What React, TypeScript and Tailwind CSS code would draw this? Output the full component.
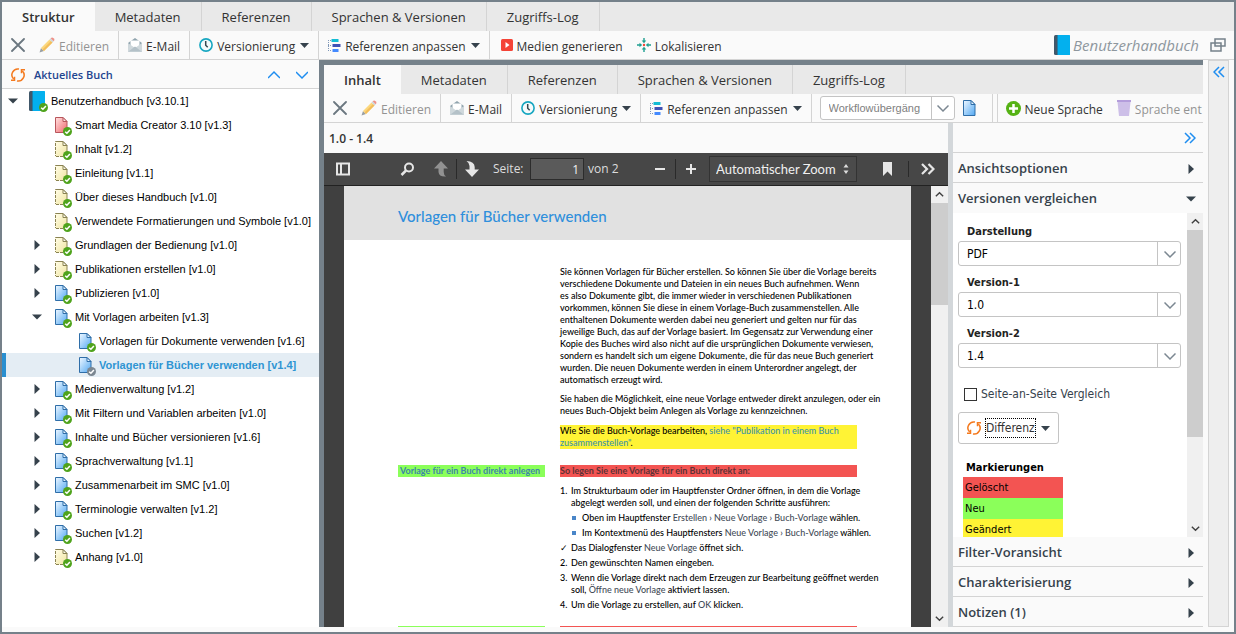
import type { ReactNode } from "react";

const TABS = ["Metadaten", "Referenzen", "Sprachen & Versionen", "Zugriffs-Log"];

type Kind = "book" | "red" | "yellow" | "blue";
type TreeNode = {
  label: string;
  depth: number;
  kind: Kind;
  toggle?: "open" | "closed";
  selected?: boolean;
};

const TREE: TreeNode[] = [
  { label: "Benutzerhandbuch [v3.10.1]", depth: 0, kind: "book", toggle: "open" },
  { label: "Smart Media Creator 3.10 [v1.3]", depth: 1, kind: "red" },
  { label: "Inhalt [v1.2]", depth: 1, kind: "yellow" },
  { label: "Einleitung [v1.1]", depth: 1, kind: "yellow" },
  { label: "Über dieses Handbuch [v1.0]", depth: 1, kind: "yellow" },
  { label: "Verwendete Formatierungen und Symbole [v1.0]", depth: 1, kind: "yellow" },
  { label: "Grundlagen der Bedienung [v1.0]", depth: 1, kind: "yellow", toggle: "closed" },
  { label: "Publikationen erstellen [v1.0]", depth: 1, kind: "yellow", toggle: "closed" },
  { label: "Publizieren [v1.0]", depth: 1, kind: "blue", toggle: "closed" },
  { label: "Mit Vorlagen arbeiten [v1.3]", depth: 1, kind: "blue", toggle: "open" },
  { label: "Vorlagen für Dokumente verwenden [v1.6]", depth: 2, kind: "blue" },
  { label: "Vorlagen für Bücher verwenden [v1.4]", depth: 2, kind: "blue", selected: true },
  { label: "Medienverwaltung [v1.2]", depth: 1, kind: "blue", toggle: "closed" },
  { label: "Mit Filtern und Variablen arbeiten [v1.0]", depth: 1, kind: "blue", toggle: "closed" },
  { label: "Inhalte und Bücher versionieren [v1.6]", depth: 1, kind: "blue", toggle: "closed" },
  { label: "Sprachverwaltung [v1.1]", depth: 1, kind: "blue", toggle: "closed" },
  { label: "Zusammenarbeit im SMC [v1.0]", depth: 1, kind: "blue", toggle: "closed" },
  { label: "Terminologie verwalten [v1.2]", depth: 1, kind: "blue", toggle: "closed" },
  { label: "Suchen [v1.2]", depth: 1, kind: "blue", toggle: "closed" },
  { label: "Anhang [v1.0]", depth: 1, kind: "yellow", toggle: "closed" },
];

const INDENT = ["pl-[6px]", "pl-[30px]", "pl-[54px]"];

/* Icons */

function Triangle({ open, className = "" }: { open?: boolean; className?: string }) {
  return (
    <svg width="10" height="10" viewBox="0 0 10 10" className={`shrink-0 ${className}`} fill="#36424c">
      <path d={open ? "M0 2.5h10L5 7.5z" : "M2.5 0v10L8 5z"} />
    </svg>
  );
}

function Caret() {
  return (
    <svg width="9" height="5" viewBox="0 0 9 5" fill="#36424c" className="ml-px shrink-0">
      <path d="M0 0h9L4.5 5z" />
    </svg>
  );
}

const PAPER = {
  red: { from: "#ffd6d6", to: "#f0686e", stroke: "#b8565c" },
  yellow: { from: "#fffbe0", to: "#efe4a0", stroke: "#8a8352" },
  blue: { from: "#dff0ff", to: "#52a8f2", stroke: "#2f6ea8" },
};

function PaperDefs() {
  return (
    <svg width="0" height="0" className="absolute" aria-hidden="true">
      <defs>
        {Object.entries(PAPER).map(([name, c]) => (
          <linearGradient key={name} id={`paper-${name}`} x1="0" y1="0" x2="1" y2="1">
            <stop offset="0.1" stopColor={c.from} />
            <stop offset="1" stopColor={c.to} />
          </linearGradient>
        ))}
      </defs>
    </svg>
  );
}

function Paper({ kind }: { kind: "red" | "yellow" | "blue" }) {
  return (
    <g stroke={PAPER[kind].stroke} strokeWidth="1">
      <path d="M.5 .5h7.500l4 4v11H.5z" fill={`url(#paper-${kind})`} />
      {kind === "yellow" && <path d="M.5 1v15M0 15.500h12" stroke="#fffbe0" strokeDasharray="1 3" />}
      <path d="M8 .5v4h4z" fill="#fff" fillOpacity="0.7" />
    </g>
  );
}

function Book() {
  return (
    <g>
      <path d="M0 1.500Q0 0 1.500 0H4v20H1.500Q0 20 0 18.500z" fill="#41586a" />
      <path d="M4 0h11.500q.5 0 .5 .5v19q0 .5-.5 .5H4z" fill="#03b0ee" />
      <path d="M3.500 0v20" stroke="#1d7fa8" />
    </g>
  );
}

function NodeIcon({ kind, grey }: { kind: Kind; grey?: boolean }) {
  return (
    <svg width="20" height="24" viewBox="0 0 20 24" className="shrink-0">
      <g transform={kind === "book" ? "translate(1 2)" : "translate(3 4)"}>
        {kind === "book" ? <Book /> : <Paper kind={kind} />}
      </g>
      <circle cx="15.500" cy="18.500" r="4.500" fill={grey ? "#7b8791" : "#4fa31c"} />
      <path d="M13.200 18.700l1.700 1.600 3-3.300" fill="none" stroke="#fff" strokeWidth="1.500" />
    </svg>
  );
}

function CloseIcon() {
  return (
    <svg width="14" height="14" viewBox="0 0 14 14" stroke="#6b7780" strokeWidth="1.800" strokeLinecap="round">
      <path d="M1 1l12 12M13 1L1 13" />
    </svg>
  );
}

function PencilIcon() {
  return (
    <svg width="16" height="16" viewBox="0 0 16 16">
      <path d="M.5 15.500l1.500-4.500 3 3z" fill="#9aa0a4" />
      <path d="M2 11l8.500-8.500 3 3L5 14z" fill="#fbd77d" />
      <path d="M3.500 12.500l8.500-8.500 1.500 1.500L5 14z" fill="#f3bd5b" />
      <path d="M10.500 2.500l1.200-1.200 3 3-1.200 1.200z" fill="#cfd6da" />
      <path d="M11.700 1.300Q13 0 14.300 .9l.9 .9Q16 3 14.700 4.300z" fill="#ee8f86" />
    </svg>
  );
}

function MailIcon() {
  return (
    <svg width="14" height="14" viewBox="0 0 14 14">
      <path d="M0 5l7-5 7 5v8.500H0z" fill="#90a4ae" />
      <path d="M2.500 2.500h9V9h-9z" fill="#fff" />
      <path d="M0 5l7 5 7-5v8q0 1-1 1H1q-1 0-1-1z" fill="#cfd8dc" />
      <path d="M.5 13.500L7 8.500l6.500 5z" fill="#b4c1c8" />
    </svg>
  );
}

function ClockIcon() {
  return (
    <svg width="14" height="14" viewBox="0 0 14 14" fill="none">
      <circle cx="7" cy="7" r="6.100" fill="#f5fbfc" stroke="#16a6c0" strokeWidth="1.600" />
      <path d="M6.700 3v4.300l2 2" stroke="#37474f" strokeWidth="1.500" />
    </svg>
  );
}

function ReferencesIcon() {
  return (
    <svg width="13" height="13" viewBox="0 0 13 13">
      <path d="M3.500 0h7v3h-7z" fill="#12bcd4" />
      <path d="M4.500 5h8v3h-8z" fill="#3f51b5" />
      <path d="M4.500 10h6v3h-6z" fill="#448aff" />
      <path d="M0 1.500h3M0 6.500h4M0 11.500h4M.5 1v11" stroke="#7f97b8" strokeDasharray="1 1" fill="none" />
    </svg>
  );
}

function MediaIcon() {
  return (
    <svg width="12" height="12" viewBox="0 0 12 12">
      <rect width="12" height="12" rx="1.500" fill="#f44336" />
      <path d="M4.500 3l4 3-4 3z" fill="#fff" />
    </svg>
  );
}

function LocalizeIcon() {
  return (
    <svg width="14" height="14" viewBox="0 0 14 14">
      <g fill="#1d9e90">
        <path id="arm" d="M6.300 0h1.400v2.500h1.600L7 5.200 4.700 2.500h1.600z" />
        <use href="#arm" transform="rotate(90 7 7)" />
        <use href="#arm" transform="rotate(180 7 7)" />
        <use href="#arm" transform="rotate(270 7 7)" />
      </g>
      <circle cx="7" cy="7" r="1.200" fill="#f44336" />
    </svg>
  );
}

function RefreshIcon() {
  return (
    <svg width="14" height="14" viewBox="0 0 14 14" fill="none" stroke="#f47a1f" strokeWidth="1.500">
      <path d="M8 1.100A5.900 5.900 0 0 0 2.600 11" />
      <path d="M0 12.200h3.500V8.700" />
      <path d="M6 12.900A5.900 5.900 0 0 0 11.400 3" />
      <path d="M14 1.800h-3.500v3.500" />
    </svg>
  );
}

function Chevron({ d, color = "#1e8df0", size = 12 }: { d: string; color?: string; size?: number }) {
  return (
    <svg width={size} height={size} viewBox="0 0 12 12" fill="none" stroke={color} strokeWidth="1.500">
      <path d={d} />
    </svg>
  );
}

/* Shared pieces */

function TabBar({ active }: { active: string }) {
  return (
    <div role="tablist" className="flex h-[29px] shrink-0 bg-[#e9e9e9]">
      <button role="tab" aria-selected="true" className="bg-[#fafafa] px-5 pt-[2px] text-[13px] font-semibold text-[#333]">
        {active}
      </button>
      {TABS.map((tab) => (
        <button key={tab} role="tab" aria-selected="false" className="border-r border-[#d4d4d4] px-5 pt-[2px] text-[13px] text-[#333]">
          {tab}
        </button>
      ))}
    </div>
  );
}

function ToolButton({ icon, label, menu, disabled }: { icon: ReactNode; label?: string; menu?: boolean; disabled?: boolean }) {
  return (
    <button disabled={disabled} className={`flex shrink-0 items-center gap-1 whitespace-nowrap ${disabled ? "text-[#939393]" : "text-[#333]"}`}>
      {icon}
      <span className="pt-1">{label}</span>
      {menu && <Caret />}
    </button>
  );
}

function ToolGroup({ children }: { children: ReactNode }) {
  return <div className="flex shrink-0 items-center gap-[14px] border-r border-[#d4d4d4] px-[9px]">{children}</div>;
}

function CommonTools() {
  return (
    <>
      <ToolGroup>
        <button aria-label="Schließen"><CloseIcon /></button>
        <ToolButton icon={<PencilIcon />} label="Editieren" disabled />
      </ToolGroup>
      <ToolGroup>
        <ToolButton icon={<MailIcon />} label="E-Mail" />
      </ToolGroup>
      <ToolGroup>
        <ToolButton icon={<ClockIcon />} label="Versionierung" menu />
      </ToolGroup>
      <ToolGroup>
        <ToolButton icon={<ReferencesIcon />} label="Referenzen anpassen" menu />
      </ToolGroup>
    </>
  );
}

function Tree() {
  return (
    <ul role="tree" className="min-h-0 grow overflow-hidden bg-white font-['Liberation_Sans',Arial,sans-serif] text-[11px] text-black">
      {TREE.map((n) => (
        <li
          key={n.label}
          role="treeitem"
          aria-selected={!!n.selected}
          className={`flex h-6 items-center whitespace-nowrap ${INDENT[n.depth]} ${
            n.selected ? "bg-[#e4edf4] font-bold text-[#2f95d3] shadow-[inset_4px_0_0_#2a8fd0]" : ""
          }`}
        >
          <span className="mr-[10px] w-[10px] shrink-0">{n.toggle && <Triangle open={n.toggle === "open"} />}</span>
          <NodeIcon kind={n.kind} grey={n.selected} />
          <span className="ml-[3px]">{n.label}</span>
        </li>
      ))}
    </ul>
  );
}

function ScrollBar({ thumb, className }: { thumb: string; className: string }) {
  return (
    <div className={`flex shrink-0 flex-col items-center bg-[#f0f0f0] ${className}`}>
      <span className="flex h-[17px] items-center"><Chevron d="M2 8l4-4 4 4" color="#404040" size={11} /></span>
      <span className={`w-full bg-[#cdcdcd] ${thumb}`} />
      <span className="mt-auto flex h-[17px] items-center"><Chevron d="M2 4l4 4 4-4" color="#404040" size={11} /></span>
    </div>
  );
}

/* PDF viewer */

function PdfToolbar() {
  return (
    <div className="flex h-[33px] shrink-0 items-center border-b border-[#222] bg-[#474747] px-3 text-[12px] text-[#ddd]">
      <button aria-label="Seitenleiste">
        <svg width="14" height="14" viewBox="0 0 14 14" fill="none" stroke="#e6e6e6" strokeWidth="2">
          <path d="M1 1.500h12v11H1zM5 1.500v11" />
        </svg>
      </button>
      <button aria-label="Suchen" className="ml-[50px]">
        <svg width="15" height="15" viewBox="0 0 15 15" fill="none" stroke="#e6e6e6" strokeWidth="2">
          <circle cx="9" cy="5.500" r="4" />
          <path d="M6 8.500L1.500 13" strokeWidth="2.500" />
        </svg>
      </button>
      <button aria-label="Vorherige Seite" className="ml-[19px]">
        <svg width="14" height="16" viewBox="0 0 14 16" fill="#929292">
          <path d="M7 0l7 7.500h-4.300V11q0 3 2.300 4.500Q5 16 4.500 11V7.500H0z" />
        </svg>
      </button>
      <span className="mx-2 h-5 w-px bg-[#2a2a2a]" />
      <button aria-label="Nächste Seite">
        <svg width="14" height="16" viewBox="0 0 14 16" fill="#e6e6e6">
          <path d="M7 16l7-7.500h-4.300V6Q9.500 .5 1.500 0 4.500 2 4.500 5v3.500H0z" />
        </svg>
      </button>
      <label htmlFor="page" className="ml-[14px] w-[37px] whitespace-nowrap">Seite:</label>
      <input id="page" defaultValue="1" className="h-[22px] w-[54px] border border-[#2c2c2c] bg-[#5a5a5a] px-1 text-right text-[#f2f2f2]" />
      <span className="ml-1 whitespace-nowrap">von 2</span>
      <button aria-label="Verkleinern" className="ml-auto">
        <svg width="12" height="12" viewBox="0 0 12 12" stroke="#e6e6e6" strokeWidth="2"><path d="M1 6h10" /></svg>
      </button>
      <span className="mx-[9px] h-5 w-px bg-[#2a2a2a]" />
      <button aria-label="Vergrößern">
        <svg width="12" height="12" viewBox="0 0 12 12" stroke="#e6e6e6" strokeWidth="2"><path d="M1 6h10M6 1v10" /></svg>
      </button>
      <div className="relative ml-3">
        <select aria-label="Zoom" className="h-[26px] w-[148px] appearance-none border border-[#333] bg-[#4b4b4b] px-[6px] pt-[2px] font-['Lato',sans-serif] text-[13px] text-[#f0f0f0]">
          <option>Automatischer Zoom</option>
        </select>
        <svg width="6" height="10" viewBox="0 0 6 10" fill="#ddd" className="pointer-events-none absolute top-2 right-2">
          <path d="M3 0l2.500 3.500h-5zM3 10l2.500-3.500h-5z" />
        </svg>
      </div>
      <button aria-label="Lesezeichen" className="ml-[26px]">
        <svg width="9" height="14" viewBox="0 0 9 14" fill="#e6e6e6"><path d="M0 0h9v14L4.500 9.500 0 14z" /></svg>
      </button>
      <span className="mr-[12px] ml-4 h-4 w-px bg-[#2a2a2a]" />
      <button aria-label="Werkzeuge" className="mr-px">
        <svg width="14" height="12" viewBox="0 0 14 12" fill="none" stroke="#e6e6e6" strokeWidth="2.200">
          <path d="M1 1l5 5-5 5M7.500 1l5 5-5 5" />
        </svg>
      </button>
    </div>
  );
}

function Term({ children }: { children: ReactNode }) {
  return <span className="text-[#444c58]">{children}</span>;
}

function PdfPage() {
  return (
    <article className="min-w-0 grow overflow-hidden bg-white font-['Lato','Open_Sans',sans-serif] text-[9px] leading-[12px] font-medium text-black">
      <h1 className="h-[54px] bg-[#e1e1e1] pt-[20px] pl-[54px] text-[15px] leading-5 text-[#2f8fdc]">
        Vorlagen für Bücher verwenden
      </h1>
      <div className="grid grid-cols-[147px_297px] gap-x-[15px] pt-[26px] pl-[54px] whitespace-nowrap">
        <div className="col-start-2">
          <p>
            Sie können Vorlagen für Bücher erstellen. So können Sie über die Vorlage bereits<br />
            verschiedene Dokumente und Dateien in ein neues Buch aufnehmen. Wenn<br />
            es also Dokumente gibt, die immer wieder in verschiedenen Publikationen<br />
            vorkommen, können Sie diese in einem Vorlage-Buch zusammenstellen. Alle<br />
            enthaltenen Dokumente werden dabei neu generiert und gelten nur für das<br />
            jeweilige Buch, das auf der Vorlage basiert. Im Gegensatz zur Verwendung einer<br />
            Kopie des Buches wird also nicht auf die ursprünglichen Dokumente verwiesen,<br />
            sondern es handelt sich um eigene Dokumente, die für das neue Buch generiert<br />
            wurden. Die neuen Dokumente werden in einem Unterordner angelegt, der<br />
            automatisch erzeugt wird.
          </p>
          <p className="mt-[7px]">
            Sie haben die Möglichkeit, eine neue Vorlage entweder direkt anzulegen, oder ein<br />
            neues Buch-Objekt beim Anlegen als Vorlage zu kennzeichnen.
          </p>
          <p className="mt-2 bg-[#fff335]">
            Wie Sie die Buch-Vorlage bearbeiten,{" "}
            <a href="#publikation" className="text-[#3d92a8]">
              siehe "Publikation in einem Buch<br />
              zusammenstellen"
            </a>
            .
          </p>
        </div>
        <h2 className="mt-4 h-3 self-start bg-[#8bff5a] pl-[2px] font-bold text-[#3d86a8]">Vorlage für ein Buch direkt anlegen</h2>
        <div className="mt-4">
          <h3 className="bg-[#f35452] font-bold text-[#5c3236]">So legen Sie eine Vorlage für ein Buch direkt an:</h3>
          <ol className="mt-2">
            <Step mark="1.">
              Im Strukturbaum oder im Hauptfenster Ordner öffnen, in dem die Vorlage<br />
              abgelegt werden soll, und einen der folgenden Schritte ausführen:
              <ul>
                <Bullet>Oben im Hauptfenster <Term>Erstellen › Neue Vorlage › Buch-Vorlage</Term> wählen.</Bullet>
                <Bullet>Im Kontextmenü des Hauptfensters <Term>Neue Vorlage › Buch-Vorlage</Term> wählen.</Bullet>
              </ul>
            </Step>
            <Step mark="✓">Das Dialogfenster <Term>Neue Vorlage</Term> öffnet sich.</Step>
            <Step mark="2.">Den gewünschten Namen eingeben.</Step>
            <Step mark="3.">
              Wenn die Vorlage direkt nach dem Erzeugen zur Bearbeitung geöffnet werden<br />
              soll, <Term>Öffne neue Vorlage</Term> aktiviert lassen.
            </Step>
            <Step mark="4.">Um die Vorlage zu erstellen, auf <Term>OK</Term> klicken.</Step>
          </ol>
        </div>
        <div className="mt-3 h-5 bg-[#8bff5a]" />
        <div className="mt-3 h-5 bg-[#f35452]" />
      </div>
    </article>
  );
}

function Step({ mark, children }: { mark: string; children: ReactNode }) {
  return (
    <li className="mb-[3px] flex">
      <span className="w-[11px] shrink-0">{mark}</span>
      <div>{children}</div>
    </li>
  );
}

function Bullet({ children }: { children: ReactNode }) {
  return (
    <li className="mt-[3px] flex items-center">
      <span className="mr-[6px] ml-px size-1 bg-[#4a86c8]" />
      <span>{children}</span>
    </li>
  );
}

/* Right panel */

function Section({ title, open }: { title: string; open?: boolean }) {
  return (
    <button
      aria-expanded={!!open}
      className={`flex h-[30px] w-full shrink-0 items-center justify-between bg-[#fafafa] pt-[2px] pr-[7px] pl-[5px] text-left text-[13px] font-semibold text-[#36424c] ${
        open ? "" : "border-b border-[#d4d4d4]"
      }`}
    >
      {title}
      <Triangle open={open} />
    </button>
  );
}

function Field({ id, label, value }: { id: string; label: string; value: string }) {
  return (
    <div className="mb-2">
      <label htmlFor={id} className="block pl-[9px] text-[11px] leading-[18px] font-bold text-[#222]">{label}</label>
      <div className="relative flex">
        <select id={id} className="h-[25px] grow appearance-none rounded-[3px] border border-[#c4c4c4] bg-white px-2 pt-px text-[12px] text-black">
          <option>{value}</option>
        </select>
        <span className="pointer-events-none absolute inset-y-0 right-0 flex w-6 items-center justify-center border-l border-[#c4c4c4]">
          <Chevron d="M0.500 3.500l5.500 5.500 5.500-5.500" color="#7b8791" />
        </span>
      </div>
    </div>
  );
}

function ComparePanel() {
  return (
    <div className="flex min-h-0 grow bg-white">
      <div className="min-w-0 grow overflow-hidden pt-[10px] pr-[6px] pl-[5px] font-['DejaVu_Sans_Condensed','DejaVu_Sans',sans-serif]">
        <Field id="view" label="Darstellung" value="PDF" />
        <Field id="v1" label="Version-1" value="1.0" />
        <Field id="v2" label="Version-2" value="1.4" />
        <label className="mt-[17px] ml-[6px] flex items-center gap-1 text-[12px] leading-[18px] text-[#36424c]">
          <input type="checkbox" className="size-[13px] appearance-none border border-[#333] bg-white" />
          Seite-an-Seite Vergleich
        </label>
        <button className="mt-[9px] flex h-8 items-center gap-1 rounded-[3px] border border-[#c4c4c4] bg-white px-2 text-[12px] text-[#333]">
          <RefreshIcon />
          <span className="border border-dotted border-black">Differenz</span>
          <Caret />
        </button>
        <h4 className="mt-[15px] ml-2 text-[11px] leading-[18px] font-bold text-black">Markierungen</h4>
        <ul className="ml-[5px] w-[100px] text-[11px] leading-[21px] text-black">
          <li className="bg-[#f35452] pl-[2px]">Gelöscht</li>
          <li className="bg-[#8bff5a] pl-[2px]">Neu</li>
          <li className="bg-[#fff335] pl-[2px]">Geändert</li>
        </ul>
      </div>
      <ScrollBar className="w-4" thumb="h-[207px]" />
    </div>
  );
}

export default function App() {
  return (
    <div className="flex h-screen flex-col overflow-hidden border-2 border-[#75818a] bg-[#fafafa] font-['Open_Sans',sans-serif] text-[12px] text-[#333]">
      <PaperDefs />
      <TabBar active="Struktur" />
      <div className="flex h-[29px] shrink-0 border-b border-[#d4d4d4]">
        <CommonTools />
        <div className="flex items-center gap-[14px] pl-[11px]">
          <ToolButton icon={<MediaIcon />} label="Medien generieren" />
          <ToolButton icon={<LocalizeIcon />} label="Lokalisieren" />
        </div>
        <div className="ml-auto flex items-center gap-[3px] pr-2 text-[15px] text-[#8e979e] italic">
          <svg width="16" height="20" viewBox="0 0 16 20"><Book /></svg>
          Benutzerhandbuch
          <button aria-label="Fenster" className="ml-2">
            <svg width="16" height="14" viewBox="0 0 16 14" fill="none" stroke="#75818a" strokeWidth="1.500">
              <path d="M5 1h10v7H5zM1 5h10v8H1z" />
            </svg>
          </button>
        </div>
      </div>

      <div className="mb-[5px] flex min-h-0 grow">
        {/* Structure tree */}
        <section className="flex w-[317px] shrink-0 flex-col">
          <header className="flex h-[29px] shrink-0 items-center border-b border-[#d4d4d4] pt-px pr-[11px] pl-[9px]">
            <RefreshIcon />
            <h2 className="ml-[9px] pt-px text-[11px] font-semibold text-[#1f4590]">Aktuelles Buch</h2>
            <button aria-label="Nach oben" className="mr-4 ml-auto"><Chevron d="M0 9l6-6 6 6" /></button>
            <button aria-label="Nach unten"><Chevron d="M0 3l6 6 6-6" /></button>
          </header>
          <Tree />
        </section>

        {/* Document window */}
        <section className="flex min-w-0 grow flex-col border-t-5 border-l-5 border-[#75818a] bg-[#fafafa]">
          <TabBar active="Inhalt" />
          <div className="flex h-[29px] shrink-0 overflow-hidden border-b border-[#d4d4d4]">
            <CommonTools />
            <div className="relative ml-2 shrink-0 self-center">
              <select aria-label="Workflow" className="block h-6 w-[135px] appearance-none rounded-[3px] border border-[#c4c4c4] bg-white pl-2 font-['Liberation_Sans',Arial,sans-serif] text-[11px] text-[#808080]">
                <option>Workflowübergäng</option>
              </select>
              <span className="pointer-events-none absolute inset-y-0 right-0 flex w-6 items-center justify-center border-l border-[#c4c4c4]">
                <Chevron d="M0.500 3.500l5.500 5.500 5.500-5.500" color="#7b8791" />
              </span>
            </div>
            <button aria-label="Dokument" className="mx-2 shrink-0">
              <svg width="13" height="16" viewBox="0 0 13 16"><Paper kind="blue" /></svg>
            </button>
            <div className="ml-2 w-[6px] shrink-0 border-x border-[#d4d4d4]" />
            <div className="flex shrink-0 items-center gap-[14px] pl-2">
              <ToolButton
                icon={
                  <svg width="15" height="15" viewBox="0 0 15 15">
                    <circle cx="7.500" cy="7.500" r="7.500" fill="#55b214" />
                    <path d="M7.500 3v9M3 7.500h9" stroke="#fff" strokeWidth="2.500" />
                  </svg>
                }
                label="Neue Sprache"
              />
              <ToolButton
                disabled
                icon={
                  <svg width="14" height="16" viewBox="0 0 14 16">
                    <path d="M.5 2h13L12 16H2z" fill="#cdbfe8" />
                    <path d="M0 0h14v2H0z" fill="#b39ddb" />
                  </svg>
                }
                label="Sprache ent"
              />
            </div>
          </div>

          <div className="flex min-h-0 grow">
            <div className="flex min-w-0 grow flex-col">
              <h3 className="h-[30px] shrink-0 pl-[5px] text-[12px] leading-[32px] font-semibold">1.0 - 1.4</h3>
              <PdfToolbar />
              <div className="flex min-h-0 grow bg-[#404040] pl-5">
                <PdfPage />
                <ScrollBar className="ml-5 w-[17px]" thumb="h-[102px]" />
              </div>
            </div>
            <aside className="flex w-[255px] shrink-0 flex-col border-l-5 border-[#d3d7da]">
              <div className="flex h-[30px] shrink-0 items-center justify-end border-b border-[#d4d4d4] pr-[7px]">
                <button aria-label="Einklappen"><Chevron d="M1 1l5 5-5 5M6 1l5 5-5 5" /></button>
              </div>
              <Section title="Ansichtsoptionen" />
              <Section title="Versionen vergleichen" open />
              <ComparePanel />
              <Section title="Filter-Voransicht" />
              <Section title="Charakterisierung" />
              <Section title="Notizen (1)" />
            </aside>
          </div>
        </section>

        <aside className="mx-[5px] flex w-[21px] shrink-0 justify-center border border-[#d4d4d4] bg-[#eee] pt-[5px]">
          <button aria-label="Ausklappen" className="self-start"><Chevron d="M6 1L1 6l5 5M11 1L6 6l5 5" /></button>
        </aside>
      </div>
    </div>
  );
}
